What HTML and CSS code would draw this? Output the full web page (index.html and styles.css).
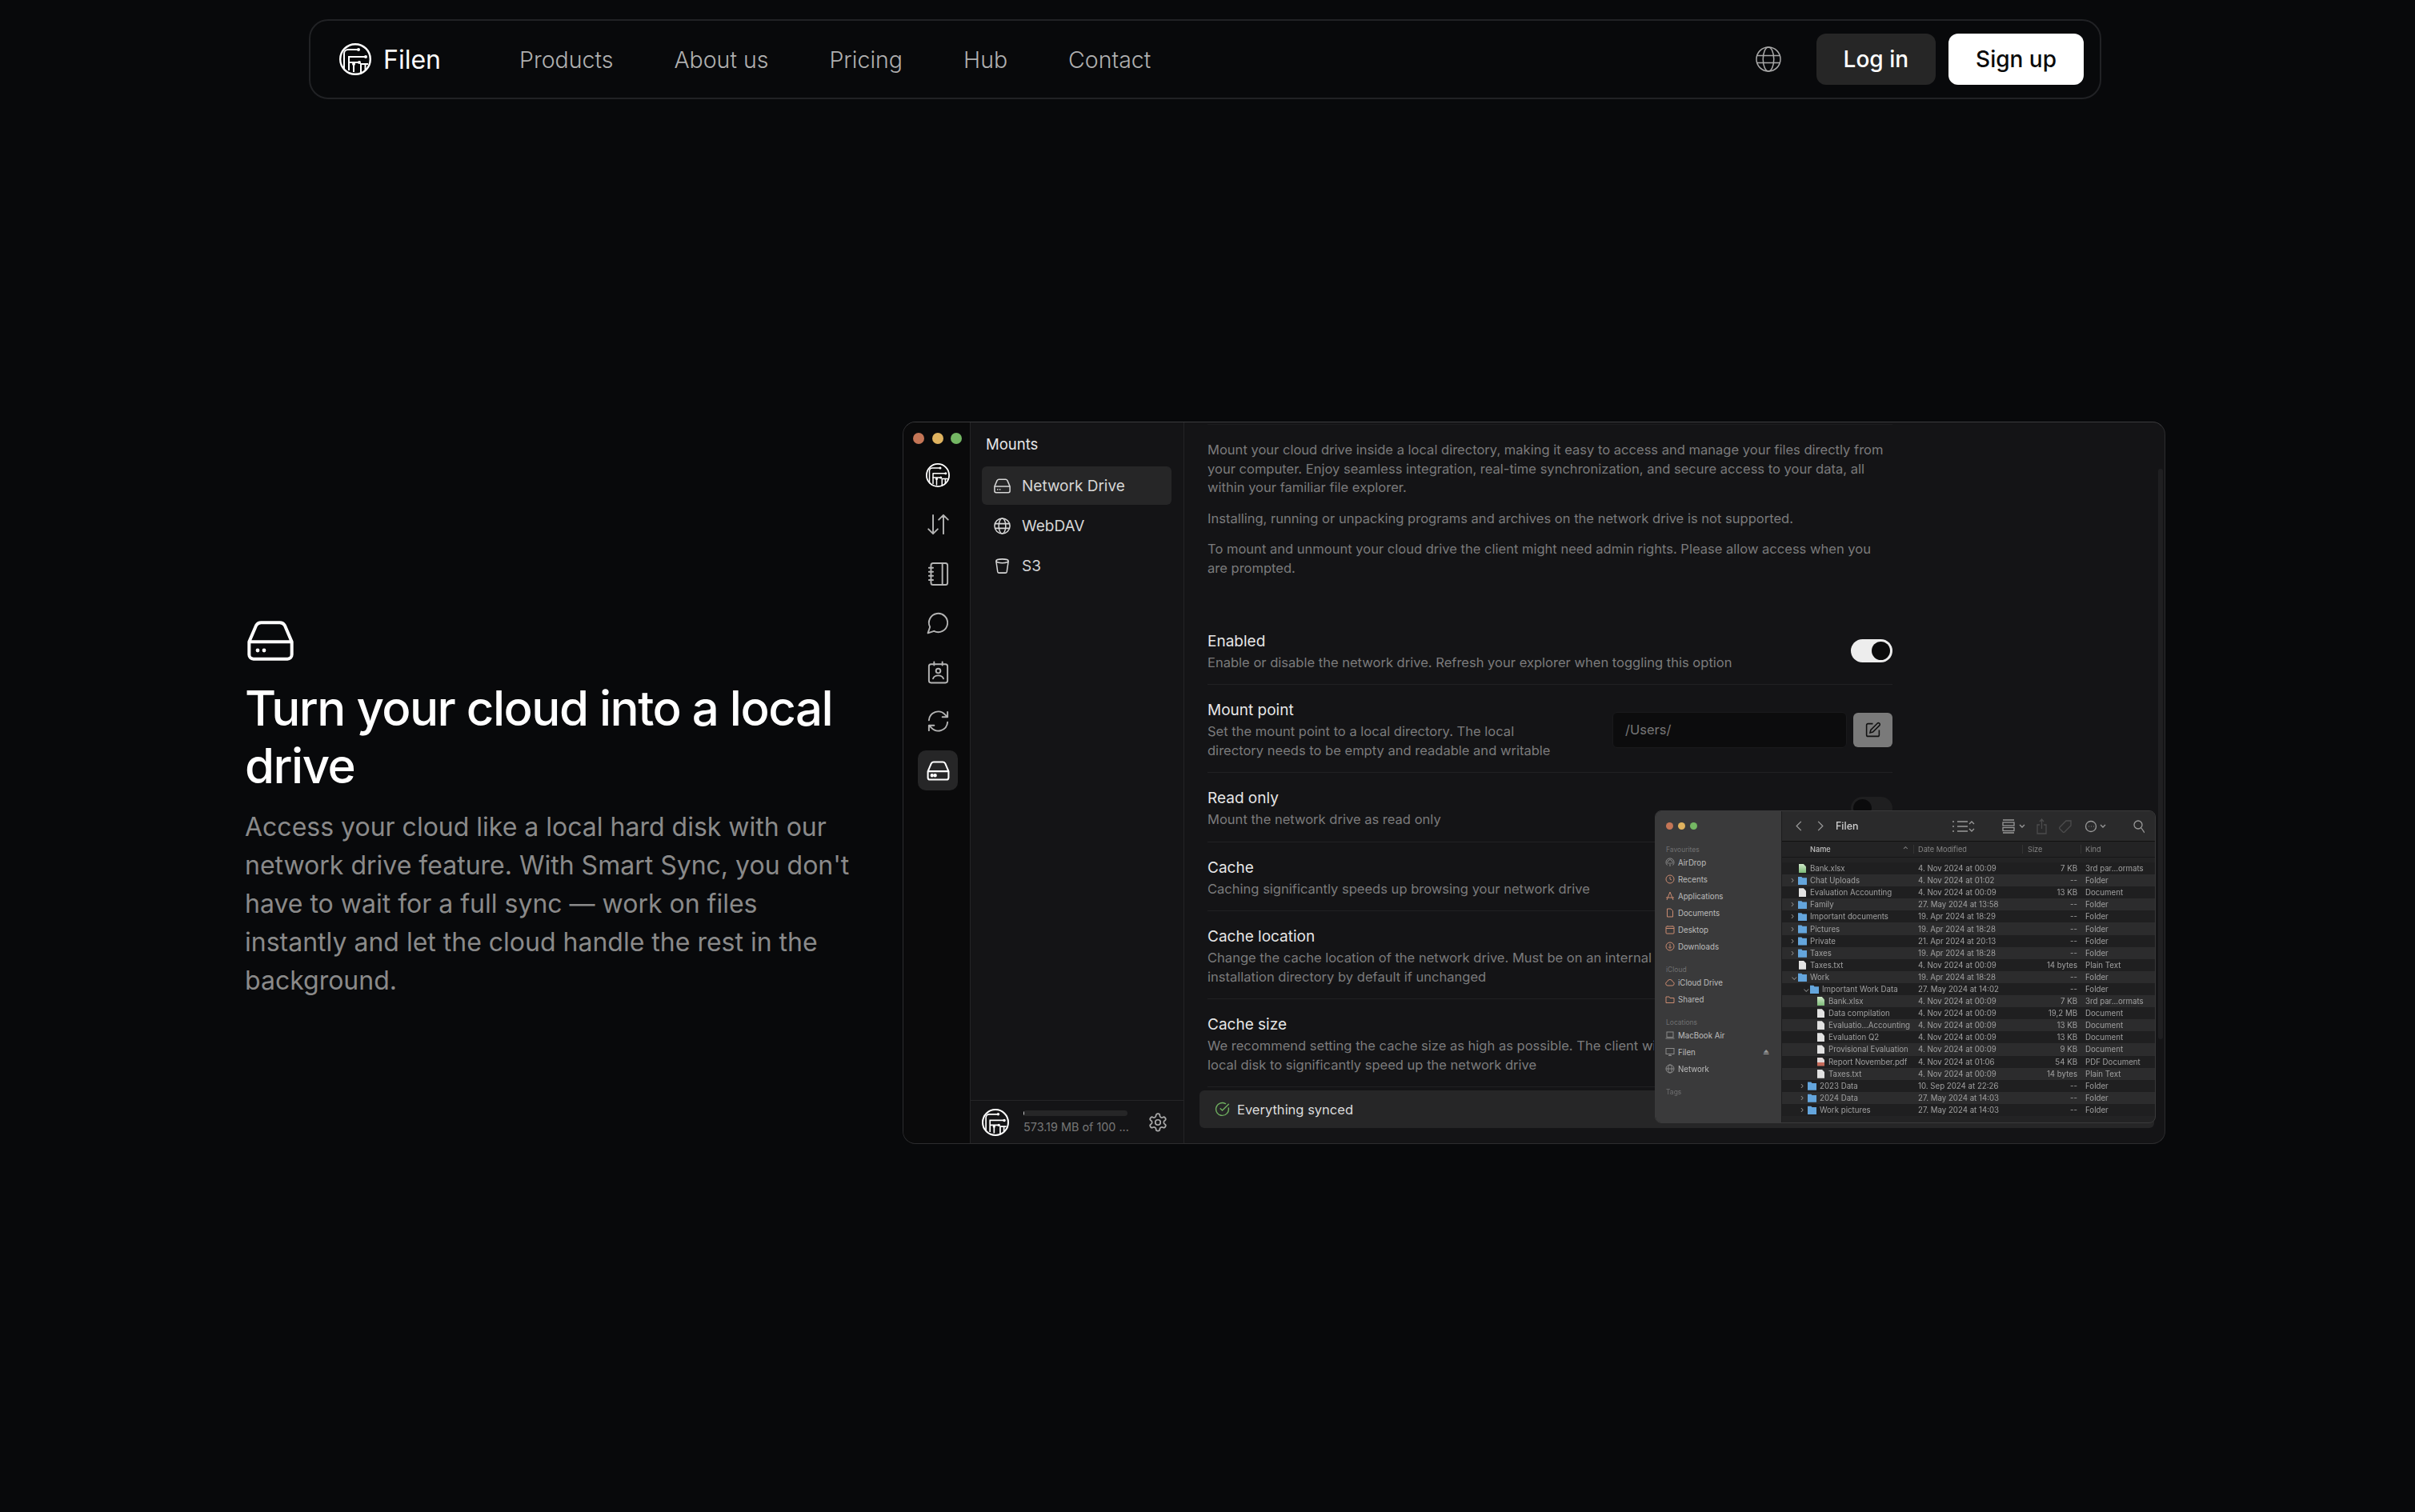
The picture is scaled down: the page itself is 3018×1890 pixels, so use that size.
FILE: index.html
```html
<!DOCTYPE html>
<html lang="en">
<head>
  <meta charset="UTF-8">
  <title>Filen</title>
  <link rel="stylesheet" href="styles.css">
</head>
<body>
  <svg class="sprites" width="0" height="0">
    <symbol id="logo" viewBox="0 0 40 40">
      <g fill="none" stroke="currentColor" stroke-width="2">
        <circle cx="20" cy="20" r="18.800" stroke-width="2.400"/>
        <path d="M6 33V13a5 5 0 0 1 5-5h13"/>
        <path d="M12 34V17h22"/>
        <path d="M12 24h13"/>
        <path d="M18 36V26"/>
        <path d="M27 37V26h9"/>
        <path d="M32.500 33V26"/>
      </g>
      <g fill="currentColor">
        <circle cx="24" cy="8" r="2"/>
        <circle cx="33" cy="17" r="2"/>
        <circle cx="25" cy="24" r="2"/>
        <circle cx="18" cy="26" r="2"/>
      </g>
    </symbol>
    <symbol id="drive" viewBox="0 0 24 24">
      <path fill="none" stroke="currentColor" stroke-linejoin="round" d="M2 12.500 5.300 4.800A2.800 2.800 0 0 1 7.900 3.500h8.200a2.800 2.800 0 0 1 2.600 1.300L22 12.500v6a2 2 0 0 1-2 2H4a2 2 0 0 1-2-2ZM2 12.500h20"/>
      <circle cx="6" cy="16.500" r=".9" fill="currentColor"/>
      <circle cx="9" cy="16.500" r=".9" fill="currentColor"/>
    </symbol>
    <symbol id="globe" viewBox="0 0 24 24">
      <g fill="none" stroke="currentColor">
        <circle cx="12" cy="12" r="10"/>
        <ellipse cx="12" cy="12" rx="4.500" ry="10"/>
        <path d="M2.500 9h19M2.500 15h19"/>
      </g>
    </symbol>
  </svg>

  <header class="navbar">
    <a class="brand" href="#">
      <svg class="brand-logo"><use href="#logo"/></svg>
      <span>Filen</span>
    </a>
    <nav class="nav-links">
      <a href="#">Products</a>
      <a href="#">About us</a>
      <a href="#">Pricing</a>
      <a href="#">Hub</a>
      <a href="#">Contact</a>
    </nav>
    <div class="nav-actions">
      <svg class="nav-globe"><use href="#globe"/></svg>
      <a class="btn btn-dark" href="#">Log in</a>
      <a class="btn btn-light" href="#">Sign up</a>
    </div>
  </header>

  <main class="hero">
    <section class="hero-text">
      <svg class="hero-icon"><use href="#drive"/></svg>
      <h1>Turn your cloud into a local drive</h1>
      <p>Access your cloud like a local hard disk with our network drive feature. With Smart Sync, you don't have to wait for a full sync — work on files instantly and let the cloud handle the rest in the background.</p>
    </section>

    <section class="app-window">
      <div class="rail">
        <div class="lights"><i class="red"></i><i class="yellow"></i><i class="green"></i></div>
        <div class="rail-icon"><svg class="rail-logo"><use href="#logo"/></svg></div>
        <div class="rail-icon">
          <svg viewBox="0 0 24 24"><path d="M7 3v18M2.500 16.500 7 21l4.500-4.500M17 21V3M12.500 7.500 17 3l4.500 4.500"/></svg>
        </div>
        <div class="rail-icon">
          <svg viewBox="0 0 24 24"><rect x="5" y="1.500" width="16" height="21" rx="2"/><path d="M16 1.500v21M3 6h4M3 9.800h4M3 13.800h4M3 17.800h4"/></svg>
        </div>
        <div class="rail-icon">
          <svg viewBox="0 0 24 24"><path d="M7.900 20A9 9 0 1 0 4 16.100L2 22Z"/></svg>
        </div>
        <div class="rail-icon">
          <svg viewBox="0 0 24 24"><rect x="3" y="4" width="18" height="18" rx="2"/><path d="M8 2v3M16 2v3M7 18c.8-2.200 2.600-3 5-3s4.200.8 5 3"/><circle cx="12" cy="10.500" r="2.200"/></svg>
        </div>
        <div class="rail-icon">
          <svg viewBox="0 0 24 24"><path d="M3 11a9 9 0 0 1 15.500-5.500L21 8M21 3v5h-5M21 13a9 9 0 0 1-15.500 5.500L3 16M3 21v-5h5"/></svg>
        </div>
        <div class="rail-icon active"><svg class="rail-drive"><use href="#drive"/></svg></div>
      </div>

      <div class="side-col">
        <div class="side-title">Mounts</div>
        <div class="side-list">
          <div class="side-item selected"><svg><use href="#drive"/></svg>Network Drive</div>
          <div class="side-item"><svg><use href="#globe"/></svg>WebDAV</div>
          <div class="side-item">
            <svg viewBox="0 0 24 24"><ellipse cx="12" cy="5.500" rx="8" ry="2.500" fill="none" stroke="currentColor"/><path d="M4 5.500 6 19.500a2 2 0 0 0 2 1.500h8a2 2 0 0 0 2-1.500l2-14" fill="none" stroke="currentColor"/></svg>
            S3
          </div>
        </div>
        <div class="side-footer">
          <svg class="avatar"><use href="#logo"/></svg>
          <div class="storage">
            <div class="storage-bar"><span style="width: 1%"></span></div>
            <div class="storage-text">573.19 MB of 100 ...</div>
          </div>
          <svg class="gear" viewBox="0 0 24 24"><path d="M12.200 2h-.4a2 2 0 0 0-2 2v.2a2 2 0 0 1-1 1.700l-.4.300a2 2 0 0 1-2 0l-.2-.1a2 2 0 0 0-2.700.7l-.2.400a2 2 0 0 0 .7 2.700l.2.100a2 2 0 0 1 1 1.700v.5a2 2 0 0 1-1 1.700l-.2.100a2 2 0 0 0-.7 2.700l.2.400a2 2 0 0 0 2.700.7l.2-.1a2 2 0 0 1 2 0l.4.300a2 2 0 0 1 1 1.700v.2a2 2 0 0 0 2 2h.4a2 2 0 0 0 2-2v-.2a2 2 0 0 1 1-1.700l.4-.3a2 2 0 0 1 2 0l.2.100a2 2 0 0 0 2.700-.7l.2-.4a2 2 0 0 0-.7-2.700l-.2-.1a2 2 0 0 1-1-1.700v-.5a2 2 0 0 1 1-1.700l.2-.1a2 2 0 0 0 .7-2.700l-.2-.4a2 2 0 0 0-2.700-.7l-.2.100a2 2 0 0 1-2 0l-.4-.3a2 2 0 0 1-1-1.700V4a2 2 0 0 0-2-2Z"/><circle cx="12" cy="12" r="3"/></svg>
        </div>
      </div>

      <div class="settings">
        <div class="settings-scroll">
          <div class="intro">
            <p>Mount your cloud drive inside a local directory, making it easy to access and manage your files directly from your computer. Enjoy seamless integration, real-time synchronization, and secure access to your data, all within your familiar file explorer.</p>
            <p>Installing, running or unpacking programs and archives on the network drive is not supported.</p>
            <p>To mount and unmount your cloud drive the client might need admin rights. Please allow access when you are prompted.</p>
          </div>

          <div class="setting">
            <div class="setting-info">
              <h4>Enabled</h4>
              <p>Enable or disable the network drive. Refresh your explorer when toggling this option</p>
            </div>
            <div class="toggle on"><i></i></div>
          </div>

          <div class="setting">
            <div class="setting-info narrow">
              <h4>Mount point</h4>
              <p>Set the mount point to a local directory. The local directory needs to be empty and readable and writable</p>
            </div>
            <div class="path-field">
              <div class="path-input">/Users/</div>
              <div class="path-btn">
                <svg viewBox="0 0 24 24"><path d="M12 3H5a2 2 0 0 0-2 2v14a2 2 0 0 0 2 2h14a2 2 0 0 0 2-2v-7"/><path d="M18.400 2.600a2.100 2.100 0 1 1 3 3L12 15l-4 1 1-4Z"/></svg>
              </div>
            </div>
          </div>

          <div class="setting">
            <div class="setting-info">
              <h4>Read only</h4>
              <p>Mount the network drive as read only</p>
            </div>
            <div class="toggle"><i></i></div>
          </div>

          <div class="setting">
            <div class="setting-info">
              <h4>Cache</h4>
              <p>Caching significantly speeds up browsing your network drive</p>
            </div>
          </div>

          <div class="setting">
            <div class="setting-info">
              <h4>Cache location</h4>
              <p class="cut-line">Change the cache location of the network drive. Must be on an internal</p>
              <p>installation directory by default if unchanged</p>
            </div>
          </div>

          <div class="setting">
            <div class="setting-info">
              <h4>Cache size</h4>
              <p class="cut-line">We recommend setting the cache size as high as possible. The client will</p>
              <p>local disk to significantly speed up the network drive</p>
            </div>
          </div>
        </div>

        <div class="sync-bar">
          <svg viewBox="0 0 24 24"><path d="M21.800 10A10 10 0 1 1 17 3.300"/><path d="m9 11 3 3L22 4"/></svg>
          Everything synced
        </div>
        <div class="scroll-thumb"></div>
      </div>

      <!-- Finder window over the settings -->
      <div class="finder">
        <aside class="finder-side">
          <div class="lights small"><i class="red"></i><i class="yellow"></i><i class="green"></i></div>
          <div class="fs-head">Favourites</div>
          <div class="fs-item"><svg viewBox="0 0 12 12"><path d="M2.500 9.500a5 5 0 1 1 7 0M4 8a3 3 0 1 1 4 0M6 6v5"/></svg>AirDrop</div>
          <div class="fs-item tint"><svg viewBox="0 0 12 12"><circle cx="6" cy="6" r="5"/><path d="M6 3v3l2 1"/></svg>Recents</div>
          <div class="fs-item tint"><svg viewBox="0 0 12 12"><path d="M6 1 2 11M6 1l4 10M1 8h10"/></svg>Applications</div>
          <div class="fs-item tint"><svg viewBox="0 0 12 12"><path d="M2.500 1H7l2.500 2.500V11h-7Z"/></svg>Documents</div>
          <div class="fs-item tint"><svg viewBox="0 0 12 12"><rect x="1" y="2" width="10" height="9" rx="1"/><path d="M1 4.500h10M3 2V1M9 2V1"/></svg>Desktop</div>
          <div class="fs-item tint"><svg viewBox="0 0 12 12"><circle cx="6" cy="6" r="5"/><path d="M6 3v5M4 6.500 6 8.500l2-2"/></svg>Downloads</div>
          <div class="fs-head">iCloud</div>
          <div class="fs-item tint"><svg viewBox="0 0 12 12"><path d="M3 10a2.500 2.500 0 0 1-.5-4.900 3.500 3.500 0 0 1 6.800 0A2.500 2.500 0 0 1 9 10Z"/></svg>iCloud Drive</div>
          <div class="fs-item tint"><svg viewBox="0 0 12 12"><path d="M1 3h4l1 1.500h5V10.500H1Z"/></svg>Shared</div>
          <div class="fs-head">Locations</div>
          <div class="fs-item"><svg viewBox="0 0 12 12"><rect x="2" y="2" width="8" height="6.500"/><path d="M.5 10h11"/></svg>MacBook Air</div>
          <div class="fs-item"><svg viewBox="0 0 12 12"><rect x="1" y="1.500" width="10" height="7"/><path d="M4 10.500h4M6 8.500v2"/></svg>Filen<span class="eject">⏏</span></div>
          <div class="fs-item"><svg viewBox="0 0 12 12"><circle cx="6" cy="6" r="5"/><ellipse cx="6" cy="6" rx="2.200" ry="5"/><path d="M1 6h10"/></svg>Network</div>
          <div class="fs-head">Tags</div>
        </aside>
        <div class="finder-main">
          <div class="finder-bar">
            <svg class="fb-chev" viewBox="0 0 12 16"><path d="M9 2 3 8l6 6"/></svg>
            <svg class="fb-chev" viewBox="0 0 12 16"><path d="m3 2 6 6-6 6"/></svg>
            <span class="fb-title">Filen</span>
            <svg class="fb-tools" viewBox="0 0 240 20">
              <path d="M0 4h2M6 4h13M0 10h2M6 10h13M0 16h2M6 16h13M21 7l3-3 3 3M21 13l3 3 3-3"/>
              <path d="M63 2h14M63 18h14"/><rect x="63" y="5" width="14" height="4"/><rect x="63" y="11.500" width="14" height="4"/>
              <path d="m84 8 3 3 3-3"/>
              <path class="faint" d="M109 8h-3v11h11V8h-3M111.500 13V1M109 4l2.500-3 2.500 3"/>
              <path class="faint" d="M134 11l8-8h6v6l-8 8a1.500 1.500 0 0 1-2 0l-4-4a1.500 1.500 0 0 1 0-2Z"/>
              <circle cx="173" cy="10" r="6.500"/><path d="M170 10h.5M173 10h.5M176 10h.5"/><path d="m185 8 3 3 3-3"/>
              <circle cx="232" cy="8" r="5"/><path d="m236 12 4 6"/>
            </svg>
          </div>
          <div class="finder-head">
            <span class="fc-name">Name<i>⌃</i></span><span class="fc-date">Date Modified</span><span class="fc-size">Size</span><span class="fc-kind">Kind</span>
          </div>
          <div class="finder-rows">
            <div class="frow"><span class="fc-name"><b class="xls"></b>Bank.xlsx</span><span class="fc-date">4. Nov 2024 at 00:09</span><span class="fc-size">7 KB</span><span class="fc-kind">3rd par...ormats</span></div>
            <div class="frow"><span class="fc-name"><u>›</u><b class="dir"></b>Chat Uploads</span><span class="fc-date">4. Nov 2024 at 01:02</span><span class="fc-size">--</span><span class="fc-kind">Folder</span></div>
            <div class="frow"><span class="fc-name"><b class="doc"></b>Evaluation Accounting</span><span class="fc-date">4. Nov 2024 at 00:09</span><span class="fc-size">13 KB</span><span class="fc-kind">Document</span></div>
            <div class="frow"><span class="fc-name"><u>›</u><b class="dir"></b>Family</span><span class="fc-date">27. May 2024 at 13:58</span><span class="fc-size">--</span><span class="fc-kind">Folder</span></div>
            <div class="frow"><span class="fc-name"><u>›</u><b class="dir"></b>Important documents</span><span class="fc-date">19. Apr 2024 at 18:29</span><span class="fc-size">--</span><span class="fc-kind">Folder</span></div>
            <div class="frow"><span class="fc-name"><u>›</u><b class="dir"></b>Pictures</span><span class="fc-date">19. Apr 2024 at 18:28</span><span class="fc-size">--</span><span class="fc-kind">Folder</span></div>
            <div class="frow"><span class="fc-name"><u>›</u><b class="dir"></b>Private</span><span class="fc-date">21. Apr 2024 at 20:13</span><span class="fc-size">--</span><span class="fc-kind">Folder</span></div>
            <div class="frow"><span class="fc-name"><u>›</u><b class="dir"></b>Taxes</span><span class="fc-date">19. Apr 2024 at 18:28</span><span class="fc-size">--</span><span class="fc-kind">Folder</span></div>
            <div class="frow"><span class="fc-name"><b class="doc"></b>Taxes.txt</span><span class="fc-date">4. Nov 2024 at 00:09</span><span class="fc-size">14 bytes</span><span class="fc-kind">Plain Text</span></div>
            <div class="frow"><span class="fc-name"><u>⌄</u><b class="dir"></b>Work</span><span class="fc-date">19. Apr 2024 at 18:28</span><span class="fc-size">--</span><span class="fc-kind">Folder</span></div>
            <div class="frow lvl1b"><span class="fc-name"><u>⌄</u><b class="dir"></b>Important Work Data</span><span class="fc-date">27. May 2024 at 14:02</span><span class="fc-size">--</span><span class="fc-kind">Folder</span></div>
            <div class="frow lvl2"><span class="fc-name"><b class="xls"></b>Bank.xlsx</span><span class="fc-date">4. Nov 2024 at 00:09</span><span class="fc-size">7 KB</span><span class="fc-kind">3rd par...ormats</span></div>
            <div class="frow lvl2"><span class="fc-name"><b class="doc"></b>Data compilation</span><span class="fc-date">4. Nov 2024 at 00:09</span><span class="fc-size">19,2 MB</span><span class="fc-kind">Document</span></div>
            <div class="frow lvl2"><span class="fc-name"><b class="doc"></b>Evaluatio...Accounting</span><span class="fc-date">4. Nov 2024 at 00:09</span><span class="fc-size">13 KB</span><span class="fc-kind">Document</span></div>
            <div class="frow lvl2"><span class="fc-name"><b class="doc"></b>Evaluation Q2</span><span class="fc-date">4. Nov 2024 at 00:09</span><span class="fc-size">13 KB</span><span class="fc-kind">Document</span></div>
            <div class="frow lvl2"><span class="fc-name"><b class="doc"></b>Provisional Evaluation</span><span class="fc-date">4. Nov 2024 at 00:09</span><span class="fc-size">9 KB</span><span class="fc-kind">Document</span></div>
            <div class="frow lvl2"><span class="fc-name"><b class="pdf"></b>Report November.pdf</span><span class="fc-date">4. Nov 2024 at 01:06</span><span class="fc-size">54 KB</span><span class="fc-kind">PDF Document</span></div>
            <div class="frow lvl2"><span class="fc-name"><b class="doc"></b>Taxes.txt</span><span class="fc-date">4. Nov 2024 at 00:09</span><span class="fc-size">14 bytes</span><span class="fc-kind">Plain Text</span></div>
            <div class="frow lvl1"><span class="fc-name"><u>›</u><b class="dir"></b>2023 Data</span><span class="fc-date">10. Sep 2024 at 22:26</span><span class="fc-size">--</span><span class="fc-kind">Folder</span></div>
            <div class="frow lvl1"><span class="fc-name"><u>›</u><b class="dir"></b>2024 Data</span><span class="fc-date">27. May 2024 at 14:03</span><span class="fc-size">--</span><span class="fc-kind">Folder</span></div>
            <div class="frow lvl1"><span class="fc-name"><u>›</u><b class="dir"></b>Work pictures</span><span class="fc-date">27. May 2024 at 14:03</span><span class="fc-size">--</span><span class="fc-kind">Folder</span></div>
          </div>
        </div>
      </div>
    </section>
  </main>
</body>
</html>
```

FILE: styles.css
```css
/* Base */
:root {
  --page-bg: #08090b;
  --panel-bg: #141416;
  --rail-bg: #0a0a0b;
  --line: #242426;
  --muted: #7b7b7c;
  --text: #e6e6e6;
}

* {
  box-sizing: border-box;
}

body {
  margin: 0;
  height: 1890px;
  background-color: var(--page-bg);
  color: white;
  font-family: Inter, "Noto Sans", sans-serif;
  overflow: hidden;
}

a {
  color: inherit;
  text-decoration: none;
}

.sprites {
  position: absolute;
}

/* Navbar */
.navbar {
  display: flex;
  align-items: center;
  width: 2240px;
  height: 100px;
  margin: 24px 0 0 386px;
  padding: 0 20px 0 36px;
  border: 2px solid #212225;
  border-radius: 24px;
}

.brand {
  display: flex;
  align-items: center;
  gap: 15px;
  font-size: 32px;
  width: 225px;
}

.brand-logo {
  width: 40px;
  height: 40px;
}

.nav-links {
  display: flex;
  gap: 76px;
  font-size: 28.500px;
  font-weight: 300;
  color: #b0b0b0;
}

.nav-actions {
  display: flex;
  align-items: center;
  margin-left: auto;
}

.nav-globe {
  width: 36px;
  height: 36px;
  margin-right: 42px;
  color: #a8a8a8;
}

.btn {
  display: flex;
  align-items: center;
  justify-content: center;
  height: 64px;
  padding: 0 34px;
  border-radius: 12px;
  font-size: 28px;
  font-weight: 500;
}

.btn-dark {
  background-color: #262626;
  margin-right: 16px;
}

.btn-light {
  background-color: white;
  color: #0a0a0a;
}

/* Hero */
.hero {
  display: flex;
  align-items: flex-start;
  height: 903px;
  margin-top: 403px;
  padding-left: 306px;
}

.hero-text {
  width: 760px;
  margin-right: 62px;
  padding-top: 242px;
}

.hero-icon {
  display: block;
  width: 64px;
  height: 64px;
  stroke-width: 1.500;
}

.hero-text h1 {
  margin: 16px 0 0;
  font-size: 60px;
  line-height: 72px;
  font-weight: 500;
  letter-spacing: -1.500px;
}

.hero-text p {
  margin: 17px 0 0;
  font-size: 32px;
  line-height: 48px;
  color: #8a8a8a;
  font-weight: 400;
}

/* App window */
.app-window {
  position: relative;
  display: flex;
  width: 1578px;
  height: 903px;
  background-color: var(--panel-bg);
  border: 1px solid #2c2c2e;
  border-top-color: #3b3b3d;
  border-radius: 16px;
  overflow: hidden;
}

.rail {
  display: flex;
  flex-direction: column;
  align-items: center;
  width: 84px;
  flex-shrink: 0;
  padding-left: 3px;
  background-color: var(--rail-bg);
  border-right: 1px solid var(--line);
  color: #b4b4b4;
}

.lights {
  display: flex;
  gap: 9.500px;
  width: 100%;
  padding: 13px 0 0 9px;
  height: 41px;
}

.lights i {
  display: block;
  width: 14px;
  height: 14px;
  border-radius: 50%;
}

.lights .red { background-color: #c47556; }
.lights .yellow { background-color: #e0b35f; }
.lights .green { background-color: #74b763; }

.rail-icon {
  display: flex;
  align-items: center;
  justify-content: center;
  width: 50px;
  height: 50px;
  margin-bottom: 11.500px;
  border-radius: 10px;
  flex-shrink: 0;
}

.rail-icon svg {
  width: 31px;
  height: 31px;
  fill: none;
  stroke: currentColor;
  stroke-width: 1.500;
  stroke-linecap: round;
  stroke-linejoin: round;
}

.rail-icon .rail-logo {
  width: 30px;
  height: 30px;
  stroke: none;
  color: white;
}

.rail-icon.active {
  background-color: #262627;
  color: white;
}

.rail-icon .rail-drive {
  stroke-width: 1.600;
}

/* Second column */
.side-col {
  display: flex;
  flex-direction: column;
  width: 267px;
  flex-shrink: 0;
  border-right: 1px solid var(--line);
}

.side-title {
  padding: 16px 0 0 19px;
  height: 55px;
  font-size: 18.500px;
  color: var(--text);
}

.side-list {
  flex: 1;
  padding: 0 15px 0 14px;
}

.side-item {
  display: flex;
  align-items: center;
  gap: 13px;
  height: 48px;
  margin-bottom: 2px;
  padding-left: 14px;
  font-size: 19px;
  color: #d6d6d6;
}

.side-item svg {
  width: 23px;
  height: 23px;
  stroke-width: 1.600;
}

.side-item.selected {
  background-color: #262627;
  border-radius: 6px;
}

.side-footer {
  display: flex;
  align-items: center;
  height: 54px;
  padding-left: 14px;
  border-top: 1px solid var(--line);
}

.avatar {
  width: 34px;
  height: 34px;
  margin-right: 18px;
}

.storage {
  width: 130px;
}

.storage-bar {
  height: 7px;
  background-color: #262627;
  border-radius: 4px;
  overflow: hidden;
}

.storage-bar span {
  display: block;
  height: 100%;
  background-color: #d0d0d0;
}

.storage-text {
  margin-top: 5px;
  font-size: 14.400px;
  color: #777;
  white-space: nowrap;
}

.gear {
  width: 26px;
  height: 26px;
  margin-left: 25px;
  fill: none;
  stroke: #aaa;
  stroke-width: 1.600;
}

/* Settings */
.settings {
  position: relative;
  flex: 1;
  padding: 0 0 0 19px;
}

.settings-scroll {
  width: 856px;
  margin-left: 10px;
  padding-top: 2px;
  border-top: 1px solid #1c1c1e;
  margin-top: 2px;
}

.intro {
  height: 237px;
  padding-top: 18px;
}

.intro p,
.setting-info p {
  margin: 0;
  font-size: 16.550px;
  line-height: 23.700px;
  color: var(--muted);
}

.intro p {
  margin-bottom: 14.500px;
}

.setting {
  display: flex;
  align-items: center;
  justify-content: space-between;
  padding: 17px 0 14.600px;
  border-bottom: 1px solid #212123;
}

.setting-info {
  width: 700px;
}

.setting-info.narrow {
  width: 440px;
}

.setting-info .cut-line {
  width: 558px;
  overflow: hidden;
  white-space: nowrap;
}

.setting-info h4 {
  margin: 0;
  font-size: 19px;
  line-height: 30px;
  font-weight: 400;
  color: var(--text);
}

.toggle {
  display: flex;
  align-items: center;
  width: 52px;
  height: 29px;
  padding: 3px;
  background-color: #1f1f20;
  border-radius: 15px;
}

.toggle i {
  display: block;
  width: 23px;
  height: 23px;
  background-color: #0b0b0c;
  border-radius: 50%;
}

.toggle.on {
  justify-content: flex-end;
  background-color: #ededed;
}

.path-field {
  display: flex;
  align-items: center;
  gap: 8px;
}

.path-input {
  display: flex;
  align-items: center;
  width: 293px;
  height: 45px;
  padding-left: 15px;
  background-color: #0c0c0d;
  border: 1px solid #1a1a1c;
  border-radius: 6px;
  font-size: 16.500px;
  color: #777;
}

.path-btn {
  display: flex;
  align-items: center;
  justify-content: center;
  width: 49px;
  height: 43px;
  background-color: #7a7a7a;
  border-radius: 6px;
}

.path-btn svg {
  width: 21px;
  height: 21px;
  fill: none;
  stroke: #111;
  stroke-width: 1.800;
}

.sync-bar {
  position: absolute;
  left: 19px;
  right: 13px;
  top: 835px;
  height: 47px;
  display: flex;
  align-items: center;
  gap: 9px;
  padding-left: 19px;
  background-color: #262627;
  border-radius: 6px;
  font-size: 16.500px;
  color: #ddd;
}

.sync-bar svg {
  width: 19px;
  height: 19px;
  fill: none;
  stroke: #6fae5f;
  stroke-width: 1.800;
  stroke-linecap: round;
}

.scroll-thumb {
  position: absolute;
  right: 2px;
  top: 58px;
  bottom: 130px;
  width: 6px;
  background-color: #1f1f21;
  border-radius: 3px;
}

/* Finder overlay */
.finder {
  position: absolute;
  left: 939px;
  top: 485px;
  display: flex;
  width: 626px;
  height: 391px;
  background-color: #232324;
  border: 1px solid #3a3a3b;
  border-radius: 8px;
  overflow: hidden;
  font-size: 9.700px;
  color: #a0a0a0;
  filter: blur(.4px);
}

.finder-side {
  width: 158px;
  flex-shrink: 0;
  background-color: #3a3a3b;
  padding-left: 13px;
  border-right: 1px solid #1c1c1d;
}

.lights.small {
  gap: 6px;
  height: 29.500px;
  padding: 13.500px 0 0 0;
}

.lights.small i {
  width: 9px;
  height: 9px;
}

.fs-head {
  display: flex;
  align-items: flex-end;
  height: 24px;
  font-size: 8.500px;
  line-height: 11px;
  color: #6f6f70;
}

.fs-item {
  display: flex;
  align-items: center;
  height: 21px;
  color: #bcbcbc;
}

.fs-item svg {
  width: 12px;
  height: 12px;
  margin: 0 4px 0 -1px;
  fill: none;
  stroke: #8a8a8a;
  stroke-width: 1;
}

.fs-item.tint svg {
  stroke: #c98a70;
}

.eject {
  margin-left: auto;
  margin-right: 15px;
  font-size: 9px;
  color: #999;
}

.finder-main {
  flex: 1;
  min-width: 0;
}

.finder-bar {
  display: flex;
  align-items: center;
  height: 38px;
  padding: 0 13px 0 15px;
  background-color: #2a2a2b;
  border-bottom: 1px solid #111;
}

.fb-chev {
  width: 12px;
  height: 15px;
  fill: none;
  stroke: #999;
  stroke-width: 1.400;
}

.fb-chev + .fb-chev {
  margin: 0 13px 0 15px;
}

.fb-title {
  font-size: 12.500px;
  font-weight: 500;
  color: #cfcfcf;
}

.fb-tools {
  width: 240px;
  height: 20px;
  margin-left: auto;
  fill: none;
  stroke: #999;
  stroke-width: 1.300;
}

.fb-tools .faint {
  stroke: #4c4c4d;
}

.finder-head {
  display: flex;
  align-items: center;
  height: 20px;
  border-bottom: 1px solid #161617;
  margin-bottom: 6px;
  font-size: 9.200px;
  color: #858585;
}

.finder-head .fc-name {
  width: 164px;
  color: #c0c0c0;
  font-weight: 500;
}

.finder-head i {
  margin-left: auto;
  margin-right: 6px;
  font-style: normal;
  color: #888;
}

.frow {
  display: flex;
  align-items: center;
  height: 15.100px;
  background-color: #1f1f20;
}

.frow:nth-child(even) {
  background-color: #2c2c2d;
}

.fc-name {
  display: flex;
  align-items: center;
  width: 170px;
  padding-left: 35px;
  flex-shrink: 0;
  white-space: nowrap;
}

.frow .fc-name b {
  position: absolute;
  margin-left: -15px;
  width: 11px;
  height: 11px;
}

.frow .fc-name u {
  position: absolute;
  margin-left: -24px;
  text-decoration: none;
  color: #888;
  font-size: 11px;
  line-height: 11px;
}

b.dir {
  background-color: #64a5dc;
  clip-path: polygon(0 8%, 40% 8%, 50% 20%, 100% 20%, 100% 100%, 0 100%);
}

b.doc,
b.xls,
b.pdf {
  clip-path: polygon(0 0, 65% 0, 100% 30%, 100% 100%, 0 100%);
}

.frow .fc-name b.doc,
.frow .fc-name b.xls,
.frow .fc-name b.pdf {
  width: 9px;
  margin-left: -14px;
}

b.doc { background-color: #e2e2e2; }
b.xls { background: linear-gradient(#cfe7c9, #7dbb78); }
b.pdf { background: linear-gradient(#e0d8d8 55%, #c46a5a 55%); }

.lvl1 .fc-name { padding-left: 47px; }
.lvl1b .fc-name { padding-left: 50px; }
.lvl2 .fc-name { padding-left: 58px; }

.fc-date {
  width: 99px;
  flex-shrink: 0;
  white-space: nowrap;
}

.fc-size {
  width: 100px;
  flex-shrink: 0;
  text-align: right;
}

.finder-head .fc-date {
  width: 136px;
  padding-left: 5px;
  border-left: 1px solid #333;
}

.finder-head .fc-size {
  width: 73px;
  padding-left: 6px;
  text-align: left;
  border-left: 1px solid #333;
}

.finder-head .fc-kind {
  padding-left: 5px;
  border-left: 1px solid #333;
}

.frow .fc-kind {
  margin-left: 10px;
  white-space: nowrap;
}
```
